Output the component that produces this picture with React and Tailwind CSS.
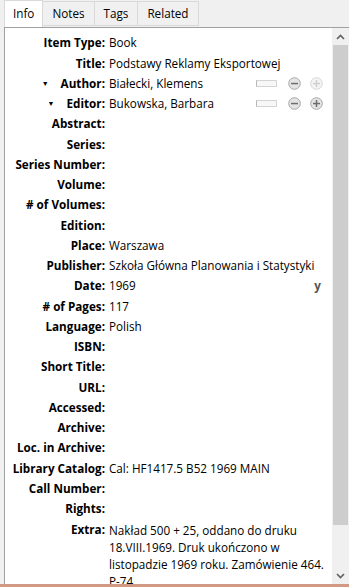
const rows = [
  { label: 'Item Type', value: 'Book' },
  { label: 'Title', value: 'Podstawy Reklamy Eksportowej' },
  { label: 'Author', value: 'Białecki, Klemens', creator: true, plusFaded: true },
  { label: 'Editor', value: 'Bukowska, Barbara', creator: true },
  { label: 'Abstract' },
  { label: 'Series' },
  { label: 'Series Number' },
  { label: 'Volume' },
  { label: '# of Volumes' },
  { label: 'Edition' },
  { label: 'Place', value: 'Warszawa' },
  { label: 'Publisher', value: 'Szkoła Główna Planowania i Statystyki' },
  { label: 'Date', value: '1969', date: true },
  { label: '# of Pages', value: '117' },
  { label: 'Language', value: 'Polish' },
  { label: 'ISBN' },
  { label: 'Short Title' },
  { label: 'URL' },
  { label: 'Accessed' },
  { label: 'Archive' },
  { label: 'Loc. in Archive' },
  { label: 'Library Catalog', value: 'Cal: HF1417.5 B52 1969 MAIN' },
  { label: 'Call Number' },
  { label: 'Rights' },
];

const CircleBtn = ({ plus, faded }) => (
  <svg width="13" height="13" viewBox="0 0 13 13">
    <circle cx="6.5" cy="6.5" r="5.8" fill={faded ? '#f4f4f4' : '#e4e4e4'} stroke={faded ? '#d6d6d6' : '#a8a8a8'} strokeWidth="1" />
    <rect x="3" y="5.8" width="7" height="1.5" fill={faded ? '#cfcfcf' : '#6e6e6e'} />
    {plus && <rect x="5.75" y="3" width="1.5" height="7" fill={faded ? '#cfcfcf' : '#6e6e6e'} />}
  </svg>
);

const Tab = ({ label, active }) => (
  <div
    className={
      active
        ? 'h-[27px] px-[8px] flex items-center bg-white border border-b-0 border-[#d9d9d9] -mb-px z-10'
        : 'h-[25px] mt-[1px] px-[9px] flex items-center bg-[#f0f0f0] border border-l-0 border-[#d9d9d9]'
    }
  >
    {label}
  </div>
);

export default function App() {
  return (
    <div
      className="w-[349px] h-[587px] overflow-hidden bg-[#f0f0f0] flex flex-col text-[11.7px] text-black"
      style={{ fontFamily: '"Open Sans", "Noto Sans", sans-serif' }}
    >
      <div className="flex flex-1 min-h-0">
        <div className="w-[4px] bg-[#f0f0f0]" />
        <div className="flex-1 flex flex-col min-w-0">
          <div className="h-[27px] flex items-start text-[11.7px]">
            <Tab label="Info" active />
            <Tab label="Notes" />
            <Tab label="Tags" />
            <Tab label="Related" />
          </div>
          <div className="flex-1 flex min-h-0 bg-white border-l border-t border-[#a0a0a0]">
            <div className="flex-1 pt-[5px] overflow-hidden">
              {rows.map((r) => (
                <div key={r.label} className="h-[20.25px] flex items-center">
                  <div className="w-[100px] shrink-0 flex items-center justify-end font-bold">
                    {r.creator && <span className="text-[7px] mr-[12px] leading-none">▼</span>}
                    {r.label}:
                  </div>
                  <div className="pl-[4px] flex-1 flex items-center whitespace-nowrap">
                    <span className="flex-1">{r.value}</span>
                    {r.creator && (
                      <div className="flex items-center mr-[9px]">
                        <div className="w-[21px] h-[7px] border border-[#d4d4d4] border-l-[#b8b8b8] bg-[#f7f7f7] mr-[11px]" />
                        <CircleBtn />
                        <span className="w-[9px]" />
                        <CircleBtn plus faded={r.plusFaded} />
                      </div>
                    )}
                    {r.date && <span className="font-bold text-[#555] mr-[11px]">y</span>}
                  </div>
                </div>
              ))}
              <div className="flex items-start">
                <div className="w-[100px] shrink-0 text-right font-bold leading-[20px]">Extra:</div>
                <div className="pl-[4px] w-[222px] leading-[17px] pt-[3px]">
                  Nakład 500 + 25, oddano do druku 18.VIII.1969. Druk ukończono w listopadzie 1969 roku. Zamówienie 464. P-74.
                </div>
              </div>
            </div>
            <div className="w-[17px] flex flex-col bg-[#f0f0f0]">
              <div className="h-[17px] flex items-center justify-center">
                <svg width="9" height="6" viewBox="0 0 9 6"><path d="M1 5 L4.5 1.5 L8 5" fill="none" stroke="#606060" strokeWidth="1.6" /></svg>
              </div>
              <div className="h-[480px] mx-[1px] bg-[#cdcdcd]" />
              <div className="flex-1" />
              <div className="h-[17px] flex items-center justify-center">
                <svg width="9" height="6" viewBox="0 0 9 6"><path d="M1 1 L4.5 4.5 L8 1" fill="none" stroke="#606060" strokeWidth="1.6" /></svg>
              </div>
            </div>
          </div>
        </div>
      </div>
      <div className="h-[3px] bg-[#d29a85]" />
    </div>
  );
}
